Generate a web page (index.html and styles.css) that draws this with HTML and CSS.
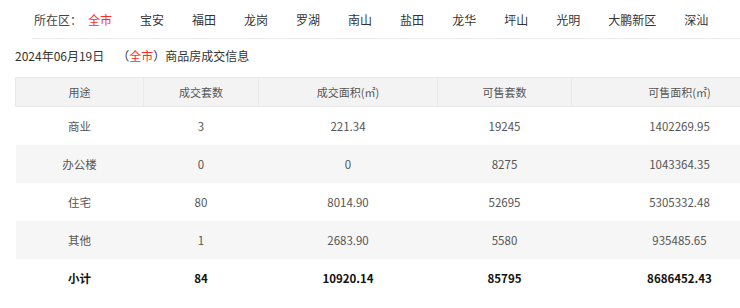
FILE: index.html
```html
<!DOCTYPE html>
<html lang="zh-CN">
<head>
<meta charset="utf-8">
<title>商品房成交信息</title>
<link rel="stylesheet" href="styles.css">
</head>
<body>
<div class="viewport">
<div class="page">
  <div class="district-bar">
    <span class="label">所在区：</span>
    <a class="district active">全市</a>
    <a class="district">宝安</a>
    <a class="district">福田</a>
    <a class="district">龙岗</a>
    <a class="district">罗湖</a>
    <a class="district">南山</a>
    <a class="district">盐田</a>
    <a class="district">龙华</a>
    <a class="district">坪山</a>
    <a class="district">光明</a>
    <a class="district">大鹏新区</a>
    <a class="district">深汕</a>
  </div>
  <div class="title">2024年06月19日<span class="scope">（<span class="red">全市</span>）</span>商品房成交信息</div>
  <table class="deal-table">
    <colgroup>
      <col class="c1"><col class="c2"><col class="c3"><col class="c4"><col class="c5">
    </colgroup>
    <thead>
      <tr><th>用途</th><th>成交套数</th><th>成交面积(㎡)</th><th>可售套数</th><th>可售面积(㎡)</th></tr>
    </thead>
    <tbody>
      <tr><td>商业</td><td>3</td><td>221.34</td><td>19245</td><td>1402269.95</td></tr>
      <tr class="alt"><td>办公楼</td><td>0</td><td>0</td><td>8275</td><td>1043364.35</td></tr>
      <tr><td>住宅</td><td>80</td><td>8014.90</td><td>52695</td><td>5305332.48</td></tr>
      <tr class="alt"><td>其他</td><td>1</td><td>2683.90</td><td>5580</td><td>935485.65</td></tr>
      <tr class="total"><td>小计</td><td>84</td><td>10920.14</td><td>85795</td><td>8686452.43</td></tr>
    </tbody>
  </table>
</div>
</div>
</body>
</html>
```

FILE: styles.css
```css
html, body {
  margin: 0;
  padding: 0;
  background: #fff;
  overflow: hidden;
}
body {
  font-family: "Noto Sans CJK SC", "Microsoft YaHei", sans-serif;
  color: #333;
}
.viewport {
  width: 100%;
  overflow: hidden;
}
.page {
  width: 800px;
}
.district-bar {
  display: flex;
  align-items: center;
  margin-left: 32px;
  padding-left: 2px;
  height: 38px;
  border-bottom: 1px solid #ececec;
  font-size: 12px;
}
.district-bar .label {
  color: #444;
  margin-right: 6px;
}
.district {
  color: #333;
  margin-right: 28px;
  white-space: nowrap;
}
.district.active {
  color: #ff2b2b;
}
.title {
  margin: 1px 0 5px 15px;
  height: 32px;
  line-height: 32px;
  font-size: 12px;
  color: #333;
  white-space: nowrap;
}
.title .scope {
  margin-left: 13px;
}
.title .red {
  color: #ff2b2b;
}
.deal-table {
  margin-left: 15px;
  width: 772px;
  table-layout: fixed;
  border-collapse: collapse;
  font-size: 11px;
  color: #555;
}
.c1 { width: 128px; }
.c2 { width: 115px; }
.c3 { width: 179px; }
.c4 { width: 134px; }
.c5 { width: 216px; }
.deal-table th {
  height: 28px;
  padding: 0;
  font-weight: normal;
  background: #f3f3f3;
  border: 1px solid #e9e9e9;
  color: #555;
  text-align: center;
}
.deal-table td {
  height: 38px;
  padding: 0;
  text-align: center;
  font-size: 11.5px;
}
.deal-table tr.alt td {
  background: #f6f6f6;
}
.deal-table tr.total td {
  font-weight: bold;
  color: #111;
}
```
